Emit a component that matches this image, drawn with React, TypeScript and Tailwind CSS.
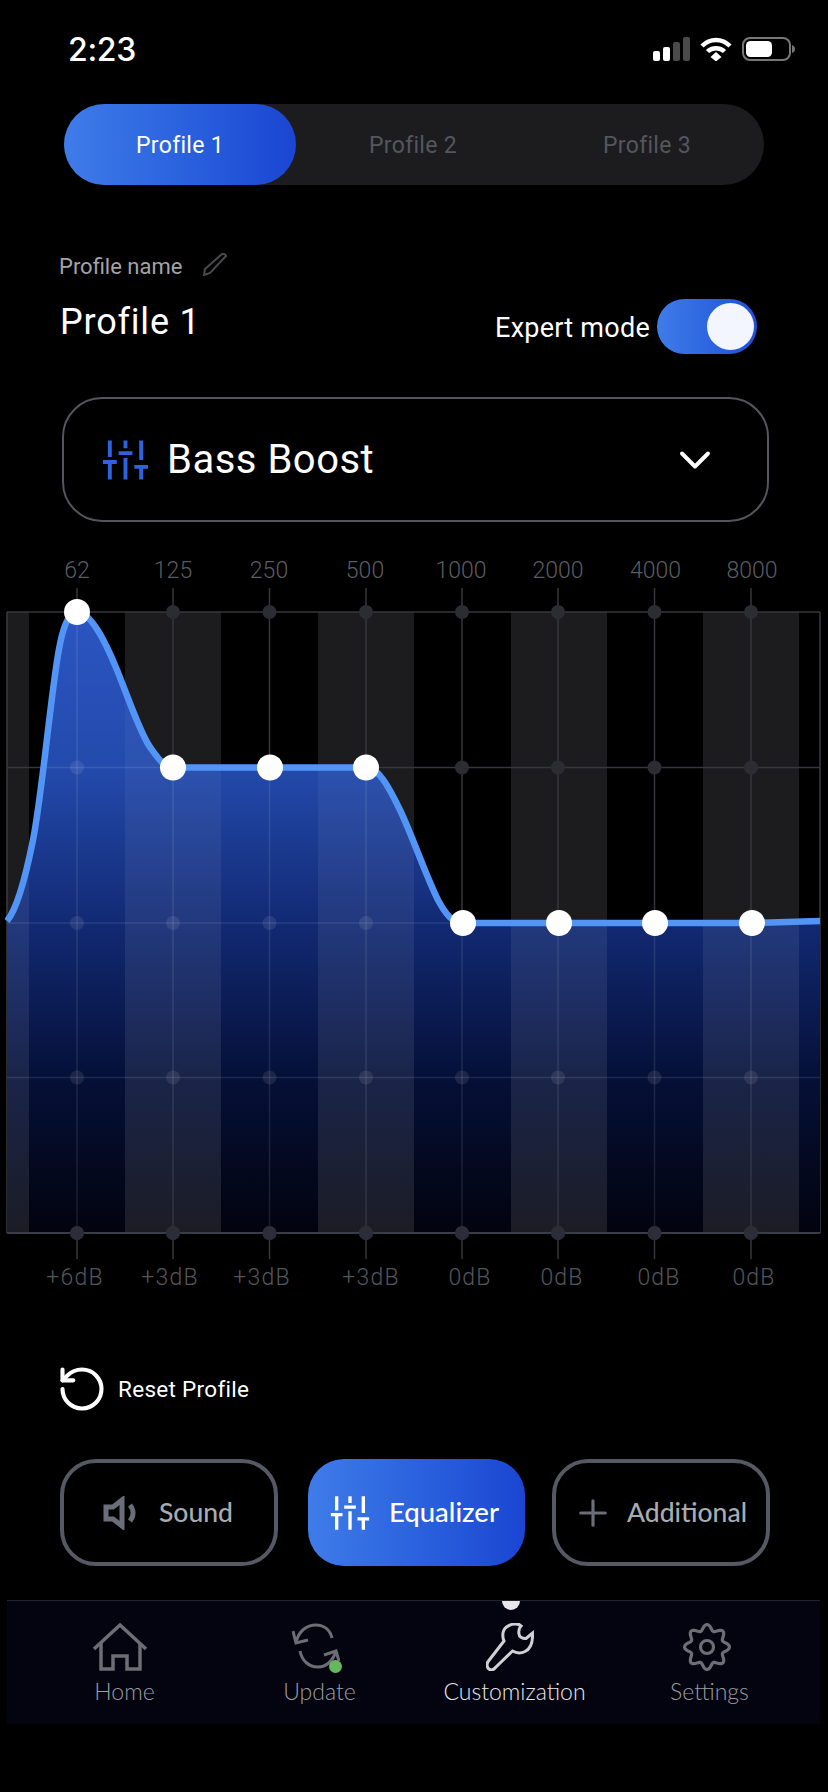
import { Plus, RotateCcw, ChevronDown } from "lucide-react";

const roboto = "font-['Roboto',sans-serif]";
const lato = "font-['Lato',sans-serif]";

const freqs = [
  { label: "62", className: "w-[96px]" },
  { label: "125", className: "w-[96px]" },
  { label: "250", className: "w-[96px]" },
  { label: "500", className: "w-[96px]" },
  { label: "1000", className: "w-[96px]" },
  { label: "2000", className: "w-[98px]" },
  { label: "4000", className: "w-[97px]" },
  { label: "8000", className: "w-[96px]" },
];

const gains = [
  { label: "+6dB", className: "w-[92px]" },
  { label: "+3dB", className: "w-[98px]" },
  { label: "+3dB", className: "w-[86px]" },
  { label: "+3dB", className: "w-[132px]" },
  { label: "0dB", className: "w-[66px]" },
  { label: "0dB", className: "w-[118px]" },
  { label: "0dB", className: "w-[76px]" },
  { label: "0dB", className: "w-[114px]" },
];

const columns = [77, 173, 269.5, 366, 462, 558, 654.5, 751];
const rows = [612, 767.5, 923, 1077.5, 1233];
const stripes = [
  [7, 22],
  [125, 96],
  [318, 96],
  [511, 96],
  [703, 96],
];
const handles = [
  [77, 612],
  [173, 767.5],
  [270, 767.5],
  [366, 767.5],
  [463, 923],
  [559, 923],
  [655, 923],
  [752, 923],
];

const curve =
  "M7 921 C18 908 27 870 33 840 C40 805 47 735 53 690 C57 660 62 612 77 612 C92 612 108 648 117 670 C128 697 140 733 150 747 C158 758 164 767.5 173 767.5 L366 767.5 C378 767.5 388 785 400 810 C412 835 426 876 438 900 C446 915 453 923 463 923 L752 923 L820 921";

// cog outline with 8 rounded teeth
const gearPath =
  Array.from({ length: 96 }, (_, i) => {
    const a = (i / 96) * Math.PI * 2;
    const r = 19.6 + 2.9 * Math.cos(8 * a);
    return `${i === 0 ? "M" : "L"}${(24 + r * Math.sin(a)).toFixed(2)} ${(24 - r * Math.cos(a)).toFixed(2)}`;
  }).join(" ") + " Z";

const SlidersIcon = ({ className }: { className: string }) => (
  <svg viewBox="0 0 48 40" className={className} fill="none" stroke="currentColor" strokeWidth="4">
    <path d="M8 0V17M1 22H15M8 22V40" />
    <path d="M24 0V8M17 13H31M24 18V40" />
    <path d="M40 0V20M33 27H47M40 27V40" />
  </svg>
);

const TabItem = ({ label, active }: { label: string; active?: boolean }) => (
  <div
    className={
      active
        ? "w-[232px] h-full pt-[3px] rounded-full flex items-center justify-center text-white bg-gradient-to-r from-[#3f7ce9] to-[#1b45d2]"
        : "w-[234px] h-full pt-[3px] flex items-center justify-center text-[#55565d]"
    }
  >
    {label}
  </div>
);

const Chart = () => (
  <svg viewBox="0 588 828 672" className="w-[828px] h-[672px] block">
    <defs>
      <linearGradient id="fill" gradientUnits="userSpaceOnUse" x1="0" y1="612" x2="0" y2="1233">
        <stop offset="0" stopColor="#2b55c2" />
        <stop offset="0.25" stopColor="#234aac" />
        <stop offset="0.5" stopColor="#122a74" />
        <stop offset="0.75" stopColor="#051038" />
        <stop offset="1" stopColor="#02030d" />
      </linearGradient>
      <linearGradient id="stripe" gradientUnits="userSpaceOnUse" x1="0" y1="612" x2="0" y2="1233">
        <stop offset="0" stopColor="#ffffff" stopOpacity="0.02" />
        <stop offset="0.5" stopColor="#ffffff" stopOpacity="0.07" />
        <stop offset="1" stopColor="#ffffff" stopOpacity="0.1" />
      </linearGradient>
      <clipPath id="under">
        <path d={`${curve} L820 1233 L7 1233 Z`} />
      </clipPath>
    </defs>

    {stripes.map(([x, w]) => (
      <rect key={x} x={x} y={612} width={w} height={621} fill="#1c1c1f" />
    ))}
    {columns.map((x) => (
      <line key={x} x1={x} x2={x} y1={588} y2={1259} stroke="#36363c" strokeWidth="1.5" />
    ))}
    {rows.map((y) => (
      <line key={y} x1={7} x2={820} y1={y} y2={y} stroke="#36363c" strokeWidth="1.5" />
    ))}
    <path d="M7 612V1233M820 612V1233" stroke="#3a3a41" strokeWidth="1.5" />
    {columns.map((x) =>
      rows.map((y) => <circle key={`${x}-${y}`} cx={x} cy={y} r="7" fill="#2c2c33" />),
    )}

    <path d={`${curve} L820 1233 L7 1233 Z`} fill="url(#fill)" />
    <g clipPath="url(#under)">
      {stripes.map(([x, w]) => (
        <rect key={x} x={x} y={612} width={w} height={621} fill="url(#stripe)" />
      ))}
      {columns.map((x) => (
        <line key={x} x1={x} x2={x} y1={612} y2={1233} stroke="#ffffff" strokeOpacity="0.1" strokeWidth="1.5" />
      ))}
      {rows.map((y) => (
        <line key={y} x1={7} x2={820} y1={y} y2={y} stroke="#ffffff" strokeOpacity="0.1" strokeWidth="1.5" />
      ))}
      {columns.map((x) =>
        rows.map((y) => <circle key={`${x}-${y}`} cx={x} cy={y} r="7" fill="#ffffff" fillOpacity="0.09" />),
      )}
    </g>
    <path d="M7 1233H820" stroke="#3a3c48" strokeWidth="2" />
    {columns.map((x) => (
      <circle key={x} cx={x} cy={1233} r="7" fill="#2c2d38" />
    ))}

    <path d={curve} fill="none" stroke="#5295f6" strokeWidth="6.5" />
    {handles.map(([x, y]) => (
      <circle key={x} cx={x} cy={y} r="13" fill="#ffffff" />
    ))}
  </svg>
);

const App = () => {
  return (
    <div className={`w-[828px] h-[1792px] bg-black overflow-hidden ${roboto}`}>
      {/* status bar */}
      <div className="h-[104px] pl-[68px] pr-[33px] pt-[28px] flex justify-between">
        <span className="text-white text-[32px] leading-[44px] font-medium font-['Inter',sans-serif] tracking-[-0.3px]">2:23</span>
        <div className="flex pt-[9px] h-[33px] items-start">
          <svg viewBox="0 0 37 24" className="w-[37px] h-[24px]" fill="#ffffff">
            <rect x="0" y="14" width="7" height="10" rx="2" />
            <rect x="10" y="10" width="7" height="14" rx="2" />
            <rect x="20" y="5" width="7" height="19" rx="2" fill="#4a4a4a" />
            <rect x="30" y="0" width="7" height="24" rx="2" fill="#4a4a4a" />
          </svg>
          <svg viewBox="0 0 32 24" className="w-[32px] h-[24px] ml-[10px]" fill="none" stroke="#ffffff" strokeWidth="4.5">
            <path d="M2 9C10 1 22 1 30 9" />
            <path d="M7.500 14.500C12 10 20 10 24.500 14.500" />
            <path d="M10.500 20L16 15L21.500 20L16 24.500Z" fill="#ffffff" stroke="none" />
          </svg>
          <svg viewBox="0 0 53 24" className="w-[53px] h-[24px] ml-[10px]" fill="none">
            <rect x="1" y="1" width="47" height="22" rx="7" stroke="#777777" strokeWidth="2" />
            <rect x="4" y="4" width="26" height="16" rx="4.5" fill="#ffffff" />
            <path d="M50 8C52 9 53 10 53 12C53 14 52 15 50 16Z" fill="#777777" />
          </svg>
        </div>
      </div>

      {/* profile tabs */}
      <div className="ml-[64px] w-[700px] h-[81px] rounded-full bg-[#1c1c1f] flex text-[23px] tracking-[0.3px]">
        <TabItem label="Profile 1" active />
        <TabItem label="Profile 2" />
        <TabItem label="Profile 3" />
      </div>

      {/* profile name */}
      <div className="mt-[69px] pl-[59px] h-[24px] flex items-center">
        <span className="text-[22px] text-[#a3a3a8]">Profile name</span>
        <svg viewBox="0 0 26 24" className="w-[26px] h-[24px] ml-[20px] -mt-[4px]" fill="none" stroke="#4a4a4e" strokeWidth="2">
          <path d="M20 2C21 1 24 2.500 24 4L8 21L2 23L3 17Z" />
        </svg>
      </div>

      <div className="mt-[21px] h-[55px] pl-[60px] pr-[71px] flex justify-between">
        <span className="text-white text-[36px] leading-[46px] tracking-[0.8px]">Profile 1</span>
        <div className="flex items-center">
          <span className="text-white text-[27px] tracking-[0.25px] mr-[7px] mt-[3px]">Expert mode</span>
          <div className="w-[100px] h-[55px] rounded-full bg-gradient-to-r from-[#3f7ce9] to-[#1f4fd6] flex items-center justify-end pr-[3px]">
            <div className="w-[47px] h-[47px] rounded-full bg-[#f3f6ff]" />
          </div>
        </div>
      </div>

      {/* preset select */}
      <div className="mt-[43px] ml-[62px] w-[707px] h-[125px] rounded-[40px] border-2 border-[#54555d] flex items-center pl-[38px] pr-[46px]">
        <SlidersIcon className="w-[47px] h-[40px] text-[#2e63de]" />
        <span className="ml-[18px] text-white text-[40px] tracking-[0.5px]">Bass Boost</span>
        <ChevronDown className="ml-auto w-[52px] h-[52px] text-white" strokeWidth={1.8} />
      </div>

      {/* equalizer */}
      <div className="mt-[33px] mb-[1px] h-[32px] pl-[29px] flex items-center text-[23px] font-light text-[#5b5c62]">
        {freqs.map((f) => (
          <span key={f.label} className={`${f.className} text-center`}>
            {f.label}
          </span>
        ))}
      </div>
      <Chart />
      <div className="h-[36px] pl-[29px] flex items-center text-[23px] font-light text-[#55565c] tracking-[1.2px]">
        {gains.map((g, i) => (
          <span key={i} className={`${g.className} text-center`}>
            {g.label}
          </span>
        ))}
      </div>

      {/* reset */}
      <div className="mt-[70px] pl-[56px] h-[48px] flex items-center">
        <RotateCcw className="w-[52px] h-[52px] text-white -mt-[2px]" strokeWidth={1.9} />
        <span className="ml-[10px] text-white text-[22.5px] tracking-[0.3px]">Reset Profile</span>
      </div>

      {/* section buttons */}
      <div className={`mt-[45px] pl-[60px] flex h-[107px] ${lato} text-[26.5px] font-medium`}>
        <div className="w-[218px] h-full rounded-[36px] border-4 border-[#555963] flex items-center pl-[39px] text-[#a9abb0]">
          <svg viewBox="0 0 36 34" className="w-[36px] h-[34px]" fill="none" stroke="#6b6e78" strokeWidth="5">
            <path d="M3 11H10L19 4V30L10 23H3Z" />
            <path d="M27 9C31 14 31 20 27 25" />
          </svg>
          <span className="ml-[20px]">Sound</span>
        </div>
        <div className="ml-[30px] w-[217px] h-full rounded-[36px] bg-gradient-to-r from-[#3f7ce9] to-[#1b45d2] flex items-center pl-[22px] text-white">
          <SlidersIcon className="w-[40px] h-[34px] text-white" />
          <span className="ml-[19px] text-[27.5px] -mt-[2px]">Equalizer</span>
        </div>
        <div className="ml-[27px] w-[218px] h-full rounded-[36px] border-4 border-[#555963] flex items-center pl-[16px] text-[#a9abb0]">
          <Plus className="w-[42px] h-[42px] text-[#6b6e78]" strokeWidth={1.8} />
          <span className="ml-[13px]">Additional</span>
        </div>
      </div>

      {/* bottom nav */}
      <div className={`relative mt-[34px] ml-[7px] w-[813px] h-[124px] bg-[#03040f] border-t border-[#23242b] pl-[20px] flex ${lato} text-[23px] font-light`}>
        <div className="absolute left-[495px] top-0 w-[18px] h-[9px] rounded-b-full bg-[#e6e6ec]" />
        <div className="w-[195px] pt-[22px] flex flex-col items-center text-[#9b9da3]">
          <svg viewBox="0 0 56 48" className="w-[56px] h-[48px] mr-[10px]" fill="none" stroke="#6c6e76" strokeWidth="3.5">
            <path d="M2 26L28 2L54 26" />
            <path d="M9 20V46H21V33H35V46H48V20" />
          </svg>
          <span className="mt-[3px]">Home</span>
        </div>
        <div className="w-[195px] pt-[22px] flex flex-col items-center text-[#9b9da3]">
          <div className="relative w-[48px] h-[48px] mr-[8px]">
            <svg viewBox="0 0 48 48" className="w-[48px] h-[48px]" fill="none" stroke="#6c6e76" strokeWidth="3">
              <path d="M4 20C6 8 15 2 24 2C32 2 38 7 40 15" />
              <path d="M1 8L4 20L16 17" />
              <path d="M8 28C10 38 17 44 26 44C34 44 41 38 44 28" />
              <path d="M32 32L44 28L47 38" />
            </svg>
            <div className="absolute right-[-2px] bottom-[-2px] w-[13px] h-[13px] rounded-full bg-[#66b85c]" />
          </div>
          <span className="mt-[3px]">Update</span>
        </div>
        <div className="w-[195px] pt-[22px] flex flex-col items-center text-[#e8e8ec]">
          <svg viewBox="0 0 48 48" className="w-[48px] h-[48px] mr-[10px]" fill="none" stroke="#d0d0d6" strokeWidth="3">
            <path d="M33 1.500C26 0 18 3 17 10C16.500 14 17 16 18 18L2.500 38C0 41 1 45 3.500 46.500C6 47.500 8 46.500 9.500 44.500L26.500 28C30 30 35 30.500 39 28.500C44 26 47 20 46.500 10L40 15.500C37 16 33 14 33 11C32.500 8 33 5 35 3Z" />
          </svg>
          <span className="mt-[3px]">Customization</span>
        </div>
        <div className="w-[195px] pt-[22px] flex flex-col items-center text-[#9b9da3]">
          <svg viewBox="0 0 48 48" className="w-[48px] h-[48px] mr-[6px]" fill="none" stroke="#6c6e76" strokeWidth="3.2">
            <path d={gearPath} strokeLinejoin="round" />
            <circle cx="24" cy="24" r="6.500" />
          </svg>
          <span className="mt-[3px]">Settings</span>
        </div>
      </div>
    </div>
  );
};

export default App;
